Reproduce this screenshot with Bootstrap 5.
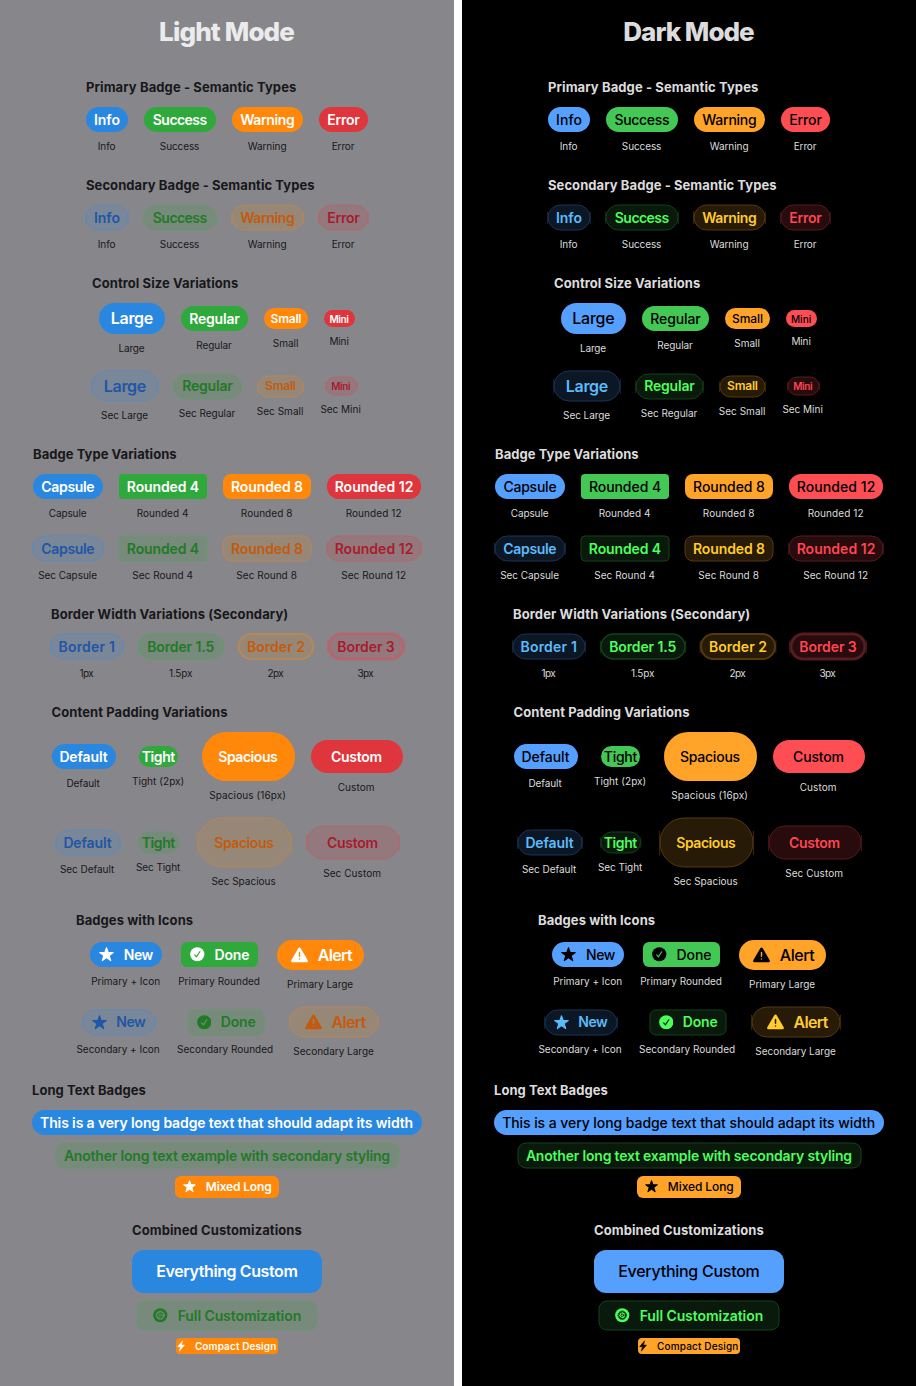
<!DOCTYPE html>
<html lang="en">
<head>
<meta charset="utf-8">
<meta name="viewport" content="width=device-width, initial-scale=1">
<title>Badge gallery</title>
<link href="https://cdn.jsdelivr.net/npm/bootstrap@5.3.0/dist/css/bootstrap.min.css" rel="stylesheet">
<style>
  body { font-family: Inter, Roboto, sans-serif; background: #fdfdff; }
  .gallery { gap: 8px; height: 1386px; }
  .pane { width: 454px; padding-top: 11px; background: var(--pane); color: var(--ink); overflow: hidden; }
  .pane-light {
    --pane: #87868b; --ink: #18181a; --title: #ebebec; --on: #fff; --on-weight: 640; --sec-weight: 580;
    --info: #2a87e0; --info-fill: #7a8798; --info-line: #6389b5; --info-text: #2056a6;
    --success: #2fa83c; --success-fill: #788a7c; --success-line: #67976f; --success-text: #217a26;
    --warning: #ff880a; --warning-fill: #978777; --warning-line: #b3885c; --warning-text: #c35b0d;
    --error: #df353c; --error-fill: #93797e; --error-line: #b3666f; --error-text: #a81c2c;
  }
  .pane-dark {
    --pane: #000; --ink: #dcdcdc; --title: #dcdcdc; --on: #000; --on-weight: 520; --sec-weight: 620;
    --info: #559fff; --info-fill: #0c1725; --info-line: #1a3457; --info-text: #5bbbfb;
    --success: #43c755; --success-fill: #09190b; --success-line: #13421a; --success-text: #4cff5b;
    --warning: #ffa329; --warning-fill: #271a07; --warning-line: #56380e; --warning-text: #ffcc2b;
    --error: #ff4d54; --error-fill: #270b0d; --error-line: #581b20; --error-text: #ff4552;
  }
  .pane-title { font-size: 26px; font-weight: 800; line-height: 41px; margin-bottom: 28px; color: var(--title); }
  .group { margin-bottom: 25px; }
  .group-title { font-size: 13px; font-weight: 750; line-height: 14px; margin: 0 0 13px; }
  .samples { gap: 16px; }
  .stack { gap: 8px; }
  .caption-text { font-size: 10px; line-height: 13px; padding-right: .8px; }
  .pill { gap: 9.7px; line-height: 1; }
  .pill .label, .pill .glyph { position: relative; }
  .pill-primary { background: var(--tone); color: var(--on); font-weight: var(--on-weight); --cut: var(--tone); }
  .pill-secondary { color: var(--tone-text); font-weight: var(--sec-weight); --cut: var(--tone-fill); }
  .frame { left: -3px; top: -3px; }
  .frame rect { fill: var(--tone-fill); stroke: var(--tone-line); }
  .frame path { fill: none; stroke: var(--tone-line); stroke-width: 1; opacity: .75; }
  .tone-info { --tone: var(--info); --tone-fill: var(--info-fill); --tone-line: var(--info-line); --tone-text: var(--info-text); }
  .tone-success { --tone: var(--success); --tone-fill: var(--success-fill); --tone-line: var(--success-line); --tone-text: var(--success-text); }
  .tone-warning { --tone: var(--warning); --tone-fill: var(--warning-fill); --tone-line: var(--warning-line); --tone-text: var(--warning-text); }
  .tone-error { --tone: var(--error); --tone-fill: var(--error-fill); --tone-line: var(--error-line); --tone-text: var(--error-text); }
  .cut-line { fill: none; stroke: var(--cut); stroke-linecap: round; stroke-linejoin: round; }
</style>
</head>
<body>
<main class="gallery d-flex">
  <section class="pane pane-light d-flex flex-column align-items-center flex-shrink-0" data-title="Light Mode" data-width="134.3"></section>
  <section class="pane pane-dark d-flex flex-column align-items-center flex-shrink-0" data-title="Dark Mode" data-width="129.8"></section>
</main>

<script src="https://cdn.jsdelivr.net/npm/bootstrap@5.3.0/dist/js/bootstrap.bundle.min.js"></script>
<script>
  const icons = {
    star: [15, 15, '<path fill="currentColor" stroke="currentColor" stroke-width="1.1" stroke-linejoin="round" d="M7.5.7 9.15 5.45 14.3 5.55 10.2 8.6 11.7 13.6 7.5 10.65 3.3 13.6 4.8 8.6.7 5.55 5.85 5.45Z"/>'],
    check: [14.5, 14.5, '<circle cx="7.25" cy="7.25" r="7.1" fill="currentColor"/><path class="cut-line" stroke-width="1.15" d="M4.7 7.9 6.4 9.9 9.8 4.7"/>'],
    alert: [17, 16, '<path fill="currentColor" stroke="currentColor" stroke-width="2.8" stroke-linejoin="round" d="M8.5 1.9 15.5 13.9H1.5Z"/><path class="cut-line" stroke-width="1.5" d="M8.5 5.5V9.3M8.5 11.9V12"/>'],
    gear: [14.5, 14.5, '<circle cx="7.25" cy="7.25" r="7.1" fill="currentColor"/><circle class="cut-line" stroke-width="1" cx="7.25" cy="7.25" r="3.5"/><circle class="cut-line" stroke-width=".8" stroke-dasharray="1 1" cx="7.25" cy="7.25" r="4.2"/><circle class="cut-line" stroke-width=".7" cx="7.25" cy="7.25" r="1.3"/><path class="cut-line" stroke-width=".6" d="M8.5 7.25H10.6M6.6 6.1 5.5 4.3M6.6 8.4 5.5 10.2"/>'],
    bolt: [8, 12, '<path fill="currentColor" stroke="currentColor" stroke-width=".5" stroke-linejoin="round" d="M5.6.8.6 6.7H3.5L2.3 11.2 7.5 5.1H4.5Z"/>']
  };

  // Badge: tone, label, label width, badge width, height, then options.
  // Options: fs font size, r radius, bw border width, i icon, is icon scale, pr and pb padding,
  // c caption, cw caption width, col column width, mb bottom margin, dw width in the dark pane.
  const I = 'info', S = 'success', W = 'warning', E = 'error';
  const b = (tone, label, lw, w, h, o = {}) => ({ tone, label, lw, w, h, fs: 14, r: h / 2, bw: 1, ...o });
  const sec = (...a) => ({ ...b(...a), secondary: true });

  const groups = [
    { title: 'Primary Badge - Semantic Types', tw: 210, rows: [[
      b(I, 'Info', 24.3, 42, 25, { c: 'Info', cw: 17.7 }), b(S, 'Success', 54.7, 72, 25, { c: 'Success', cw: 39.3 }),
      b(W, 'Warning', 53.8, 71, 25, { c: 'Warning', cw: 38.7 }), b(E, 'Error', 32.2, 49, 25, { c: 'Error', cw: 23 })]] },
    { title: 'Secondary Badge - Semantic Types', tw: 228.3, rows: [[
      sec(I, 'Info', 24.3, 42, 25, { c: 'Info', cw: 17.7 }), sec(S, 'Success', 54.7, 72, 25, { c: 'Success', cw: 39.3 }),
      sec(W, 'Warning', 53.8, 71, 25, { c: 'Warning', cw: 38.7 }), sec(E, 'Error', 32.2, 49, 25, { c: 'Error', cw: 23 })]] },
    { title: 'Control Size Variations', tw: 146, rows: [[
      b(I, 'Large', 41, 66, 31, { fs: 16, pb: 1, dw: 65, c: 'Large', cw: 26.3 }), b(S, 'Regular', 50, 67, 25, { c: 'Regular', cw: 35.7 }),
      b(W, 'Small', 30.8, 44, 21, { fs: 12, dw: 45, c: 'Small', cw: 25.3 }), b(E, 'Mini', 19.8, 31, 17, { fs: 10, pr: .8, c: 'Mini', cw: 19 })], [
      sec(I, 'Large', 41, 66, 30, { fs: 16, c: 'Sec Large', cw: 47.3 }), sec(S, 'Regular', 50, 67, 25, { c: 'Sec Regular', cw: 56.7 }),
      sec(W, 'Small', 30.8, 45, 21, { fs: 12, c: 'Sec Small', cw: 46.3, col: 47 }), sec(E, 'Mini', 19.8, 31, 18, { fs: 10, c: 'Sec Mini', cw: 40, col: 42 })]] },
    { title: 'Badge Type Variations', tw: 143.3, rows: [[
      b(I, 'Capsule', 53, 70, 25, { c: 'Capsule', cw: 38 }), b(S, 'Rounded 4', 71, 88, 25, { r: 4, c: 'Rounded 4', cw: 51.3 }),
      b(W, 'Rounded 8', 71, 88, 25, { r: 8, c: 'Rounded 8', cw: 51.3 }), b(E, 'Rounded 12', 77, 94, 25, { r: 12, c: 'Rounded 12', cw: 55.7 })], [
      sec(I, 'Capsule', 53, 70, 25, { c: 'Sec Capsule', cw: 59 }), sec(S, 'Rounded 4', 71, 88, 25, { r: 4, c: 'Sec Round 4', cw: 60.3 }),
      sec(W, 'Rounded 8', 71, 88, 25, { r: 8, c: 'Sec Round 8', cw: 60.3 }), sec(E, 'Rounded 12', 77, 94, 25, { r: 12, c: 'Sec Round 12', cw: 64.7 })]] },
    { title: 'Border Width Variations (Secondary)', tw: 236.3, rows: [[
      sec(I, 'Border 1', 54.5, 72, 25, { pr: .6, c: '1px', cw: 15 }), sec(S, 'Border 1.5', 66.3, 84, 25, { bw: 1.5, pr: .6, c: '1.5px', cw: 24 }),
      sec(W, 'Border 2', 56.3, 74, 25, { bw: 2, c: '2px', cw: 16.7 }), sec(E, 'Border 3', 56.5, 74, 25, { bw: 3, c: '3px', cw: 16.7 })]] },
    { title: 'Content Padding Variations', tw: 175.8, rows: [[
      b(I, 'Default', 47.3, 64, 25, { c: 'Default', cw: 34 }), b(S, 'Tight', 33.7, 39, 21, { c: 'Tight (2px)', cw: 51.7, col: 54 }),
      b(W, 'Spacious', 59.7, 93, 49, { c: 'Spacious (16px)', cw: 76 }), b(E, 'Custom', 50.5, 92, 33, { c: 'Custom', cw: 36 })], [
      sec(I, 'Default', 47.3, 64, 25, { c: 'Sec Default', cw: 55 }), sec(S, 'Tight', 33.7, 39.5, 21, { c: 'Sec Tight', cw: 45, col: 46 }),
      sec(W, 'Spacious', 59.7, 93, 49, { c: 'Sec Spacious', cw: 64 }), sec(E, 'Custom', 50.5, 92, 33, { c: 'Sec Custom', cw: 57 })]] },
    { title: 'Badges with Icons', tw: 116.8, rows: [[
      b(I, 'New', 28.7, 72, 25, { i: 'star', pr: 8.7, mb: 1, c: 'Primary + Icon', cw: 69 }), b(S, 'Done', 33.7, 76.6, 25, { i: 'check', r: 6, pr: 8.3, mb: 1, c: 'Primary Rounded', cw: 81.7, col: 83 }),
      b(W, 'Alert', 35.4, 87, 30, { fs: 16, i: 'alert', pr: 11.3, pb: 1, c: 'Primary Large', cw: 66.3 })], [
      sec(I, 'New', 28.7, 72, 25, { i: 'star', pr: 8.8, c: 'Secondary + Icon', cw: 83.3, col: 85 }), sec(S, 'Done', 33.7, 76, 25, { i: 'check', r: 6, pr: 7.8, c: 'Secondary Rounded', cw: 96, col: 97 }),
      sec(W, 'Alert', 35.4, 88, 30, { fs: 16, i: 'alert', pr: 11.5, c: 'Secondary Large', cw: 80.7 })]] },
    { title: 'Long Text Badges', tw: 113.5, stack: [
      b(I, 'This is a very long badge text that should adapt its width', 372.5, 390, 25, { pr: .8 }),
      sec(S, 'Another long text example with secondary styling', 325.5, 343, 25, { r: 8 }),
      b(W, 'Mixed Long', 65.4, 104, 22, { fs: 12, r: 6, i: 'star', is: .87, pr: 7.3 })] },
    { title: 'Combined Customizations', tw: 169.5, stack: [
      b(I, 'Everything Custom', 140.3, 190, 43, { fs: 16, r: 12, pb: 1 }),
      sec(S, 'Full Customization', 122, 180, 29, { r: 8, i: 'gear', pr: 15.8 }),
      b(W, 'Compact Design', 81.3, 102, 16, { fs: 10, r: 4, i: 'bolt', pr: 1.7 })] }
  ];

  const pen = document.createElement('canvas').getContext('2d');

  // Tracking that gives a label its designed width at the given size and weight.
  function tracked(text, width, size, weight) {
    pen.font = `${weight} ${size}px Inter`;
    const m = pen.measureText(text);
    const drawn = m.actualBoundingBoxRight + m.actualBoundingBoxLeft;
    const gap = ((width - drawn) / (text.length - 1)).toFixed(3);
    return `letter-spacing:${gap}px;margin-right:${-gap}px`;
  }

  function iconSvg(name, scale = 1) {
    const [w, h, body] = icons[name];
    return `<svg class="glyph flex-shrink-0" width="${w * scale}" height="${h * scale}" viewBox="0 0 ${w} ${h}" aria-hidden="true">${body}</svg>`;
  }

  function frame(s) {
    const ticks = s.r >= 12 || s.r === s.h / 2;
    const y1 = 3 + s.h * .26, y2 = 3 + s.h * .76, o = s.bw / 2;
    const marks = ticks ? `<path d="M${2.9 - o + .25} ${y1}V${y2}M${s.w + 3.1 + o - .25} ${y1}V${y2}"/>` : '';
    return `<svg class="frame position-absolute" width="${s.w + 6}" height="${s.h + 6}" aria-hidden="true">
      <rect x="3" y="3" width="${s.w}" height="${s.h}" rx="${s.r}" stroke-width="${s.bw}"/>${marks}</svg>`;
  }

  function badge(s, t) {
    const kind = s.secondary ? 'pill-secondary' : 'pill-primary';
    const weight = s.secondary ? t.sec : t.on;
    const just = s.i ? 'justify-content-end' : 'justify-content-center';
    return `<span class="pill ${kind} tone-${s.tone} position-relative d-inline-flex align-items-center ${just} text-nowrap"
      style="width:${s.w}px;height:${s.h}px;border-radius:${s.r}px;font-size:${s.fs}px;padding-right:${s.pr || 0}px;padding-bottom:${s.pb || 0}px">
      ${s.secondary ? frame(s) : ''}${s.i ? iconSvg(s.i, s.is) : ''}<span class="label" style="${tracked(s.label, s.lw, s.fs, weight)}">${s.label}</span></span>`;
  }

  function sample(item, t) {
    const s = t.dark && item.dw ? { ...item, w: item.dw } : item;
    return `<div class="stack d-flex flex-column align-items-center" style="width:${s.col || s.w}px;margin-bottom:${s.mb || 0}px">${badge(s, t)}
      <span class="caption-text text-nowrap" style="${tracked(s.c, s.cw, 10, 400)}">${s.c}</span></div>`;
  }

  function group(g, t) {
    const body = g.rows
      ? `<div class="samples d-flex flex-column align-items-center">${g.rows.map(r =>
          `<div class="samples d-flex align-items-center">${r.map(s => sample(s, t)).join('')}</div>`).join('')}</div>`
      : `<div class="stack d-flex flex-column align-items-center">${g.stack.map(s => badge(s, t)).join('')}</div>`;
    return `<div class="group"><h2 class="group-title text-nowrap" style="${tracked(g.title, g.tw, 13, 750)}">${g.title}</h2>${body}</div>`;
  }

  document.querySelectorAll('.pane').forEach(pane => {
    const css = getComputedStyle(pane);
    const theme = {
      on: css.getPropertyValue('--on-weight').trim(),
      sec: css.getPropertyValue('--sec-weight').trim(),
      dark: pane.classList.contains('pane-dark')
    };
    pane.innerHTML = `<h1 class="pane-title text-nowrap" style="${tracked(pane.dataset.title, +pane.dataset.width, 26, 800)}">${pane.dataset.title}</h1>`
      + groups.map(g => group(g, theme)).join('');
  });
</script>
</body>
</html>
